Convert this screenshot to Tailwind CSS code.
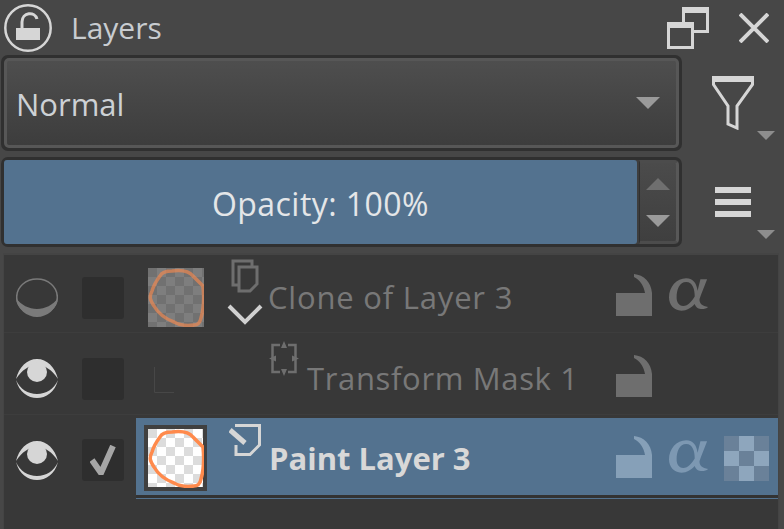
<!DOCTYPE html>
<html lang="en">
<head>
  <meta charset="UTF-8" />
  <title>Layers</title>
  <script src="https://cdn.jsdelivr.net/npm/@tailwindcss/browser@4"></script>
</head>
<body class="bg-[#474747] w-[784px] h-[529px] overflow-hidden font-['Open_Sans','Noto_Sans',sans-serif] text-[#d2d2d2]">

  <svg width="0" height="0" class="absolute">
    <defs>
      <pattern id="check" width="18" height="18" patternUnits="userSpaceOnUse">
        <rect width="18" height="18" fill="#fff"/>
        <rect width="9" height="9" fill="#dcdcdc"/>
        <rect x="9" y="9" width="9" height="9" fill="#dcdcdc"/>
      </pattern>
      <symbol id="lockopen" viewBox="0 0 36 42">
        <path d="M0 19h36v23H0z" fill="currentColor"/>
        <path d="M18 0C28 1 35 8 36 19h-7C28 12 24 6 18 3z" fill="currentColor"/>
      </symbol>
      <symbol id="alpha" viewBox="0 0 42 34">
        <path d="M33 1h7c-3 8-6 15-8 21 0 5 3 7 9 8-3 3-12 4-14-3-4 4-8 7-14 7C5 34 0 28 0 20 0 9 8 0 18 0c8 0 11 6 12 13zM18 4C11 4 8 12 8 20c0 5 2 9 7 9 5 0 9-5 12-10 0-7-2-15-9-15z" fill="currentColor"/>
      </symbol>
      <symbol id="eye" viewBox="0 0 42 39">
        <path d="M0 20C3 8 11 0 21 0s18 8 21 20C36 11 29 6 21 6S6 11 0 20z" fill="currentColor"/>
        <circle cx="21" cy="13" r="10" fill="currentColor"/>
        <path d="M0 21c4 9 12 14 21 14s17-5 21-14C39 33 30 39 21 39S3 33 0 21z" fill="currentColor"/>
      </symbol>
      <symbol id="blob" viewBox="0 0 56 59">
        <path d="M12 8C14 4 19 3 24 3 32 2 41 3 45 8L55 18C56 28 56 40 53 50 52 55 50 57 46 57 38 58 31 57 26 54 18 51 10 45 6 38 2 32 1 29 4 23 6 16 9 12 12 8z" fill="none" stroke="#ff8a4c" stroke-width="3.500"/>
      </symbol>
    </defs>
  </svg>

  <!-- title bar -->
  <div class="h-[55px] flex items-center pl-1 pr-[15px]">
    <svg width="48" height="48" viewBox="0 0 48 48" class="text-[#d6d6d6]">
      <circle cx="24" cy="24" r="22.700" fill="none" stroke="currentColor" stroke-width="2.500"/>
      <path d="M12 24h24v12H12z" fill="currentColor"/>
      <path d="M18 24v-6C18 8 31 7 33 15" fill="none" stroke="currentColor" stroke-width="3"/>
    </svg>
    <span class="ml-[19px] text-[30px] leading-none text-[#c8ccd0]">Layers</span>
    <svg width="42" height="42" viewBox="0 0 42 42" class="ml-auto mr-[30px] text-[#d6d6d6]" fill="currentColor">
      <path d="M15 0h27v26H27v-3h12V6H18v9h-3z"/>
      <path d="M0 15h27v27H0zM3 21v18h21V21z" fill-rule="evenodd"/>
    </svg>
    <svg width="30" height="30" viewBox="0 0 30 30" class="text-[#d6d6d6]" stroke="currentColor" stroke-width="4">
      <path d="M1 1l28 28M29 1L1 29"/>
    </svg>
  </div>

  <!-- blend mode -->
  <div class="h-[96px] flex pl-[1px]">
    <div class="w-[681px] h-[96px] rounded-[7px] border-[3px] border-[#303030] bg-[#303030]">
      <div class="h-full rounded-[5px] border-[3px] border-[#575757] bg-gradient-to-b from-[#4e4e4e] to-[#3d3d3d] flex items-center pl-[9px] pr-[16px]">
        <span class="mt-[2px] text-[31px] leading-none text-[#cdd1d5]">Normal</span>
        <span class="ml-auto w-0 h-0 border-x-[12px] border-x-transparent border-t-[12px] border-t-[#9a9a9a]"></span>
      </div>
    </div>
    <div class="relative ml-[30px] w-[72px] h-[90px] pt-[21px]">
      <svg width="42" height="54" viewBox="0 0 42 54" fill="none" stroke="#d6d6d6" stroke-width="3">
        <path d="M1.500 1.500h39v7L25 30v22l-9-4V30L1.500 8.500z"/>
        <path d="M0 3h42" stroke-width="6"/>
      </svg>
      <span class="absolute left-[45px] top-[76px] w-0 h-0 border-x-[9px] border-x-transparent border-t-[9px] border-t-[#8d8d8d]"></span>
    </div>
  </div>

  <!-- opacity -->
  <div class="h-[90px] mt-[6px] flex pl-[1px]">
    <div class="w-[681px] h-[90px] rounded-[7px] border-[3px] border-[#303030] bg-[#3e3e3e] flex">
      <div class="w-[633px] bg-[#53728f] rounded-[3px] flex items-center justify-center pt-[3px] text-[32px] leading-none text-[#e4e6e8] tracking-[0.45px]">Opacity: 100%</div>
      <div class="flex-1 ml-[2px] border-l-[1px] border-[#2f2f2f] rounded-r-[5px] border-y-[3px] border-r-[3px] border-y-[#4c4c4c] border-r-[#585858] bg-gradient-to-b from-[#4b4b4b] to-[#3f3f3f] flex flex-col items-center justify-center gap-[25px] pr-[1px]">
        <span class="w-0 h-0 border-x-[12px] border-x-transparent border-b-[12px] border-b-[#6f6f6f]"></span>
        <span class="w-0 h-0 border-x-[12px] border-x-transparent border-t-[12px] border-t-[#9a9a9a]"></span>
      </div>
    </div>
    <div class="relative ml-[33px] w-[68px] h-[90px] flex flex-col gap-[6px] pt-[30px]">
      <span class="block w-[36px] h-[6px] bg-[#d6d6d6]"></span>
      <span class="block w-[36px] h-[6px] bg-[#d6d6d6]"></span>
      <span class="block w-[36px] h-[6px] bg-[#d6d6d6]"></span>
      <span class="absolute left-[42px] top-[73px] w-0 h-0 border-x-[9px] border-x-transparent border-t-[9px] border-t-[#8d8d8d]"></span>
    </div>
  </div>

  <!-- layer list -->
  <div class="h-[276px] mt-[6px] ml-[3px] mr-[5px] border-t-[2px] border-l-[1px] border-r-[1px] border-[#444444] bg-[#383838]">

    <!-- clone layer -->
    <div class="h-[78px] pt-[8px] flex items-center border-b-[1px] border-[#3d3d3d] pl-[12px]">
      <svg width="42" height="39" viewBox="0 0 42 39" class="text-[#7a7a7a]">
        <ellipse cx="21" cy="19" rx="20.300" ry="18" fill="none" stroke="currentColor" stroke-width="1.500"/>
        <path d="M0 20c5 7 13 11 21 11s16-4 21-11c-1 11-11 19-21 19S1 31 0 20z" fill="currentColor"/>
      </svg>
      <span class="ml-[24px] w-[42px] h-[42px] rounded-[3px] bg-[#2e2e2e]"></span>
      <svg width="56" height="59" viewBox="0 0 56 59" class="ml-[24px]">
        <rect width="56" height="59" fill="url(#check)" opacity="0.35"/>
        <use href="#blob" width="56" height="59" opacity="0.6"/>
      </svg>
      <div class="ml-[23px] w-[36px] self-start flex flex-col items-center -mt-[4px]">
        <svg width="28" height="34" viewBox="0 0 28 34" fill="none" stroke="#6e6e6e" stroke-width="3">
          <path d="M7 26H2V2h19v6"/>
          <path d="M8 8h18v17l-7 7H8z"/>
        </svg>
        <svg width="36" height="22" viewBox="0 0 36 22" class="mt-[10px]" fill="none" stroke="#d0d0d0" stroke-width="4">
          <path d="M2 3l16 16L34 3"/>
        </svg>
      </div>
      <span class="ml-[5px] text-[31px] leading-none text-[#787878] tracking-[0.8px]">Clone of Layer 3</span>
      <svg width="36" height="42" class="ml-auto mb-[6px] text-[#6e6e6e]"><use href="#lockopen"/></svg>
      <svg width="40" height="33" class="ml-[17px] mr-[69px] mb-[6px] text-[#6e6e6e]"><use href="#alpha"/></svg>
    </div>

    <!-- transform mask -->
    <div class="h-[82px] pt-[10px] flex items-center border-b-[1px] border-[#3d3d3d] pl-[12px]">
      <svg width="42" height="39" class="text-[#d6d6d6]"><use href="#eye"/></svg>
      <span class="ml-[24px] w-[42px] h-[42px] rounded-[3px] bg-[#2e2e2e]"></span>
      <svg width="20" height="26" viewBox="0 0 20 26" class="ml-[30px] self-start mt-[24px]" fill="none" stroke="#474747" stroke-width="1">
        <path d="M.5 0v25.500H20"/>
      </svg>
      <div class="ml-[95px] w-[30px] self-start -mt-[2px]">
        <svg width="30" height="35" viewBox="0 0 30 35" fill="none" stroke="#6e6e6e" stroke-width="2.500">
          <path d="M11 4H3.500v27H11M19 4h7.500v27H19"/>
          <path d="M15 0l3 7h-6zM15 35l-3-7h6zM0 17.500l7-3v6zM30 17.500l-7 3v-6z" fill="#6e6e6e" stroke="none"/>
        </svg>
      </div>
      <span class="ml-[8px] text-[31px] leading-none text-[#787878] tracking-[0.65px]">Transform Mask 1</span>
      <svg width="36" height="42" class="ml-auto mr-[126px] mb-[6px] text-[#6e6e6e]"><use href="#lockopen"/></svg>
    </div>

    <!-- paint layer -->
    <div class="h-[84px] flex items-center pl-[12px]">
      <svg width="42" height="39" class="mt-[6px] text-[#d6d6d6]"><use href="#eye"/></svg>
      <span class="ml-[24px] mt-[6px] w-[42px] h-[42px] rounded-[3px] bg-[#2e2e2e] flex items-center justify-center">
        <svg width="26" height="30" viewBox="0 0 26 30" fill="none" stroke="#a6a6a6" stroke-width="6"><path d="M2 15l9 13L23 1"/></svg>
      </span>
      <div class="ml-[12px] mt-[3px] flex-1 self-stretch flex items-center bg-[#53728f] border-b-[1px] border-[#53728f] shadow-[inset_0_-3px_0_#333]">
        <svg width="63" height="66" viewBox="0 0 63 66" class="ml-[8px] shrink-0">
          <rect x="2" y="2" width="59" height="62" fill="none" stroke="#404040" stroke-width="4"/>
          <g transform="translate(4 4)">
            <rect width="55" height="58" fill="url(#check)"/>
            <use href="#blob" width="56" height="59"/>
          </g>
        </svg>
        <svg width="32" height="32" viewBox="0 0 32 32" class="ml-[22px] self-start mt-[6px] shrink-0" fill="none" stroke="#d6d6d6" stroke-width="3">
          <path d="M6 1.500h24.500V21L21 30.500H7V21"/>
          <path d="M1 6l15 13" stroke-width="5"/>
        </svg>
        <span class="ml-[8px] text-[31px] leading-none font-bold text-[#d8d8d8]">Paint Layer 3</span>
        <svg width="36" height="42" class="ml-auto mb-[3px] text-[#86a0b8] shrink-0"><use href="#lockopen"/></svg>
        <svg width="40" height="33" class="ml-[17px] mb-[3px] text-[#7d98b2] shrink-0"><use href="#alpha"/></svg>
        <svg width="45" height="45" viewBox="0 0 3 3" class="ml-[15px] mr-[9px] shrink-0" shape-rendering="crispEdges">
          <rect width="3" height="3" fill="#6a8199"/>
          <path d="M1 0h1v1H1zM0 1h1v1H0zM2 1h1v1H2zM1 2h1v1H1z" fill="#8ea6bd"/>
        </svg>
      </div>
    </div>
  </div>

</body>
</html>
